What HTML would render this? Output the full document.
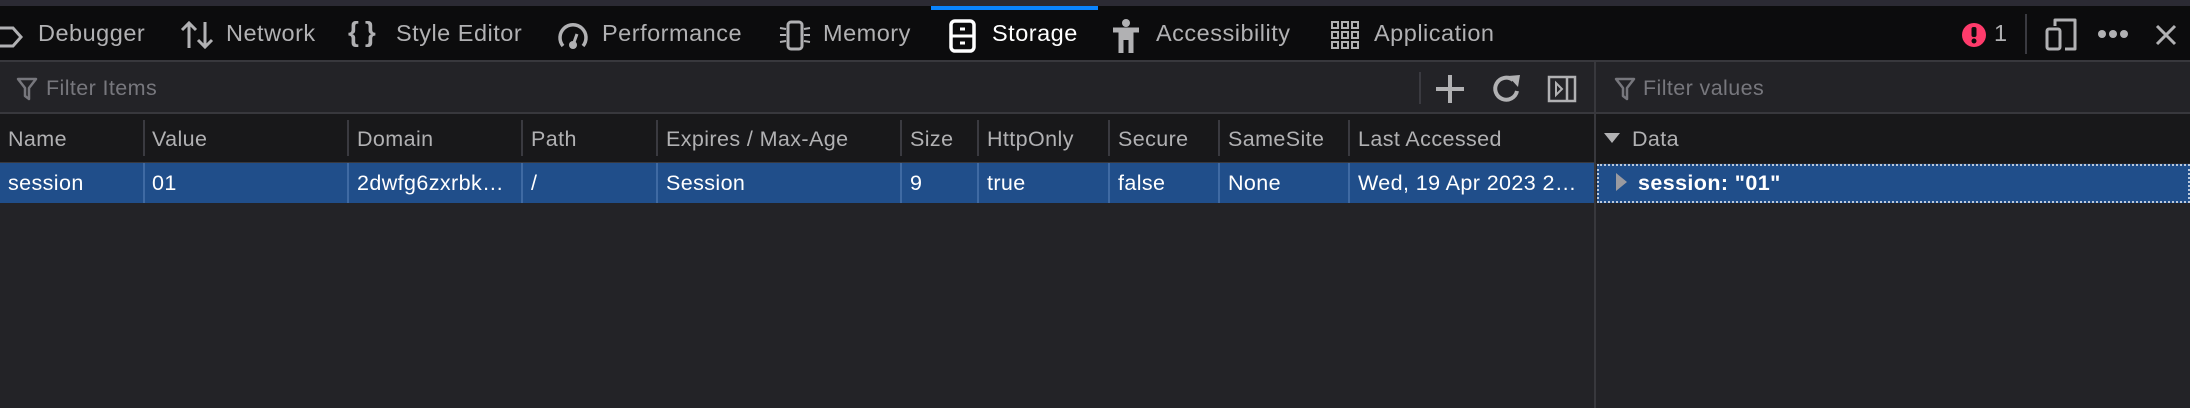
<!DOCTYPE html><html><head><style>
*{margin:0;padding:0;box-sizing:border-box}
body{width:2190px;height:408px;background:#232327;font-family:"Liberation Sans",sans-serif;overflow:hidden;position:relative;color:#b1b1b3}
.a{position:absolute;white-space:nowrap}
.tb{top:0;left:0;width:2190px;height:62px;background:#0c0c0d;border-top:6px solid #2b2a33;border-bottom:2px solid #38383d}
.t{font-size:23.5px;top:20px;color:#b1b1b3;letter-spacing:0.5px}
.fb{top:62px;left:0;width:2190px;height:52px;background:#232327;border-bottom:2px solid #38383d}
.hd{top:114px;left:0;width:1594px;height:49px;background:#18181a;border-bottom:1px solid #38383d}
.hdr{top:114px;left:1596px;width:594px;height:49px;background:#18181a}
.h{font-size:21.5px;top:127px;color:#b1b1b3;letter-spacing:0.4px}
.row{top:163px;left:0;width:1594px;height:40px;background:#204e8a}
.c{font-size:21.5px;top:171px;color:#fff;letter-spacing:0.4px}
.cs{position:absolute;width:2px;background:#3a3a40}
svg{position:absolute}
</style></head><body>
<div class="a tb"></div>
<div class="a" style="left:931px;top:6px;width:167px;height:4px;background:#0a84ff"></div>
<svg style="left:0;top:24px" width="26" height="26" viewBox="0 0 26 26"><path d="M-2 4H13L21 13L13 22H-2" fill="none" stroke="#b1b1b3" stroke-width="3"/></svg>
<div class="a t" style="left:38px">Debugger</div>
<svg style="left:180px;top:20px" width="34" height="30"><path d="M9 28V3M2 10L9 3L16 10M25 2V27M18 20L25 27L32 20" fill="none" stroke="#b1b1b3" stroke-width="3"/></svg>
<div class="a t" style="left:226px">Network</div>
<div class="a t" style="left:348px;top:16px;font-size:28px;font-weight:bold;letter-spacing:6px">{}</div>
<div class="a t" style="left:396px">Style Editor</div>
<svg style="left:556px;top:18px" width="34" height="34"><path d="M7 28A13 13 0 1 1 27 28" fill="none" stroke="#b1b1b3" stroke-width="3.5"/><path d="M17 27L21 16" stroke="#b1b1b3" stroke-width="3"/><circle cx="17" cy="27" r="4" fill="#b1b1b3"/></svg>
<div class="a t" style="left:602px">Performance</div>
<svg style="left:778px;top:19px" width="34" height="34"><rect x="10" y="3" width="14" height="27" rx="3" fill="none" stroke="#b1b1b3" stroke-width="3"/><path d="M2 9l6 1M2 16h6M2 23l6-1M32 9l-6 1M32 16h-6M32 23l-6-1" stroke="#b1b1b3" stroke-width="2"/></svg>
<div class="a t" style="left:823px">Memory</div>
<svg style="left:948px;top:18px" width="30" height="36"><rect x="3" y="3" width="23" height="30" rx="4" fill="none" stroke="#fff" stroke-width="3.5"/><path d="M3 18H26M12 11h5M12 25h5" stroke="#fff" stroke-width="3"/></svg>
<div class="a t" style="left:992px;color:#fff">Storage</div>
<svg style="left:1112px;top:18px" width="30" height="36"><circle cx="14" cy="5" r="4" fill="#b1b1b3"/><path d="M1 12H27M14 12V22M9 12V35M19 12V35" stroke="#b1b1b3" stroke-width="5" fill="none"/></svg>
<div class="a t" style="left:1156px">Accessibility</div>
<svg style="left:1331px;top:21px" width="30" height="30"><g fill="none" stroke="#b1b1b3" stroke-width="2"><rect x="1" y="1" width="6" height="6"/><rect x="11" y="1" width="6" height="6"/><rect x="21" y="1" width="6" height="6"/><rect x="1" y="11" width="6" height="6"/><rect x="11" y="11" width="6" height="6"/><rect x="21" y="11" width="6" height="6"/><rect x="1" y="21" width="6" height="6"/><rect x="11" y="21" width="6" height="6"/><rect x="21" y="21" width="6" height="6"/></g></svg>
<div class="a t" style="left:1374px">Application</div>
<svg style="left:1961px;top:22px" width="26" height="26"><circle cx="13" cy="13" r="12" fill="#ff3b6b"/><rect x="10.5" y="5" width="5" height="10" rx="2" fill="#0c0c0d"/><circle cx="13" cy="19" r="2.5" fill="#0c0c0d"/></svg>
<div class="a t" style="left:1994px">1</div>
<div class="a" style="left:2025px;top:14px;width:2px;height:40px;background:#3a3a40"></div>
<svg style="left:2045px;top:17px" width="34" height="34"><path d="M10 9V3H30V32H20" fill="none" stroke="#b1b1b3" stroke-width="3" stroke-linejoin="round"/><rect x="2" y="12" width="13" height="20" rx="2" fill="none" stroke="#b1b1b3" stroke-width="3"/></svg>
<svg style="left:2097px;top:28px" width="34" height="12"><circle cx="5" cy="6" r="4" fill="#b1b1b3"/><circle cx="16" cy="6" r="4" fill="#b1b1b3"/><circle cx="27" cy="6" r="4" fill="#b1b1b3"/></svg>
<svg style="left:2154px;top:23px" width="24" height="24"><path d="M3 3L21 21M21 3L3 21" stroke="#b1b1b3" stroke-width="3"/></svg>

<div class="a fb"></div>
<svg style="left:16px;top:77px" width="22" height="24"><path d="M2 2H20L13 11V22L9 19V11Z" fill="none" stroke="#77777d" stroke-width="2.5" stroke-linejoin="round"/></svg>
<div class="a" style="left:46px;top:76px;font-size:21.5px;color:#77777d;letter-spacing:0.4px">Filter Items</div>
<div class="a" style="left:1419px;top:72px;width:2px;height:32px;background:#3a3a40"></div>
<svg style="left:1435px;top:74px" width="30" height="30"><path d="M15 1V29M1 15H29" stroke="#b1b1b3" stroke-width="4"/></svg>
<svg style="left:1491px;top:73px" width="32" height="32"><path d="M26 18A11 11 0 1 1 22 7" fill="none" stroke="#b1b1b3" stroke-width="4"/><path d="M17 3L29 2L27 14Z" fill="#b1b1b3"/></svg>
<svg style="left:1547px;top:75px" width="30" height="28"><rect x="2" y="2" width="26" height="24" fill="none" stroke="#b1b1b3" stroke-width="2.5"/><path d="M20 2V26" stroke="#b1b1b3" stroke-width="2.5"/><path d="M9 8L15 14L9 20Z" fill="none" stroke="#b1b1b3" stroke-width="2"/></svg>
<div class="a" style="left:1594px;top:62px;width:2px;height:346px;background:#38383d"></div>
<svg style="left:1614px;top:77px" width="22" height="24"><path d="M2 2H20L13 11V22L9 19V11Z" fill="none" stroke="#77777d" stroke-width="2.5" stroke-linejoin="round"/></svg>
<div class="a" style="left:1643px;top:76px;font-size:21.5px;color:#77777d;letter-spacing:0.4px">Filter values</div>

<div class="a hd"></div>
<div class="a hdr"></div>
<div class="a" style="left:0;top:162px;width:1594px;height:2px;background:#38383d"></div>
<div class="a row"></div>
<div class="a" style="left:1597px;top:164px;width:593px;height:39px;background:#204e8a;border:2px dotted #b9c8dc"></div>

<div class="cs" style="left:143px;top:120px;height:36px"></div>
<div class="cs" style="left:347px;top:120px;height:36px"></div>
<div class="cs" style="left:521px;top:120px;height:36px"></div>
<div class="cs" style="left:656px;top:120px;height:36px"></div>
<div class="cs" style="left:900px;top:120px;height:36px"></div>
<div class="cs" style="left:977px;top:120px;height:36px"></div>
<div class="cs" style="left:1108px;top:120px;height:36px"></div>
<div class="cs" style="left:1218px;top:120px;height:36px"></div>
<div class="cs" style="left:1348px;top:120px;height:36px"></div>
<div class="cs" style="left:143px;top:163px;height:40px;background:#3f6aa3"></div>
<div class="cs" style="left:347px;top:163px;height:40px;background:#3f6aa3"></div>
<div class="cs" style="left:521px;top:163px;height:40px;background:#3f6aa3"></div>
<div class="cs" style="left:656px;top:163px;height:40px;background:#3f6aa3"></div>
<div class="cs" style="left:900px;top:163px;height:40px;background:#3f6aa3"></div>
<div class="cs" style="left:977px;top:163px;height:40px;background:#3f6aa3"></div>
<div class="cs" style="left:1108px;top:163px;height:40px;background:#3f6aa3"></div>
<div class="cs" style="left:1218px;top:163px;height:40px;background:#3f6aa3"></div>
<div class="cs" style="left:1348px;top:163px;height:40px;background:#3f6aa3"></div>

<div class="a h" style="left:8px">Name</div>
<div class="a h" style="left:152px">Value</div>
<div class="a h" style="left:357px">Domain</div>
<div class="a h" style="left:531px">Path</div>
<div class="a h" style="left:666px">Expires / Max-Age</div>
<div class="a h" style="left:910px">Size</div>
<div class="a h" style="left:987px">HttpOnly</div>
<div class="a h" style="left:1118px">Secure</div>
<div class="a h" style="left:1228px">SameSite</div>
<div class="a h" style="left:1358px">Last Accessed</div>
<svg style="left:1604px;top:133px" width="16" height="12"><path d="M0 0H16L8 10Z" fill="#b1b1b3"/></svg>
<div class="a h" style="left:1632px">Data</div>

<div class="a c" style="left:8px">session</div>
<div class="a c" style="left:152px">01</div>
<div class="a c" style="left:357px">2dwfg6zxrbk…</div>
<div class="a c" style="left:531px">/</div>
<div class="a c" style="left:666px">Session</div>
<div class="a c" style="left:910px">9</div>
<div class="a c" style="left:987px">true</div>
<div class="a c" style="left:1118px">false</div>
<div class="a c" style="left:1228px">None</div>
<div class="a c" style="left:1358px">Wed, 19 Apr 2023 2…</div>
<svg style="left:1616px;top:173px" width="12" height="18"><path d="M0 0L11 9L0 18Z" fill="#9a9aa0"/></svg>
<div class="a c" style="left:1638px;font-weight:bold">session: "01"</div>
</body></html>
